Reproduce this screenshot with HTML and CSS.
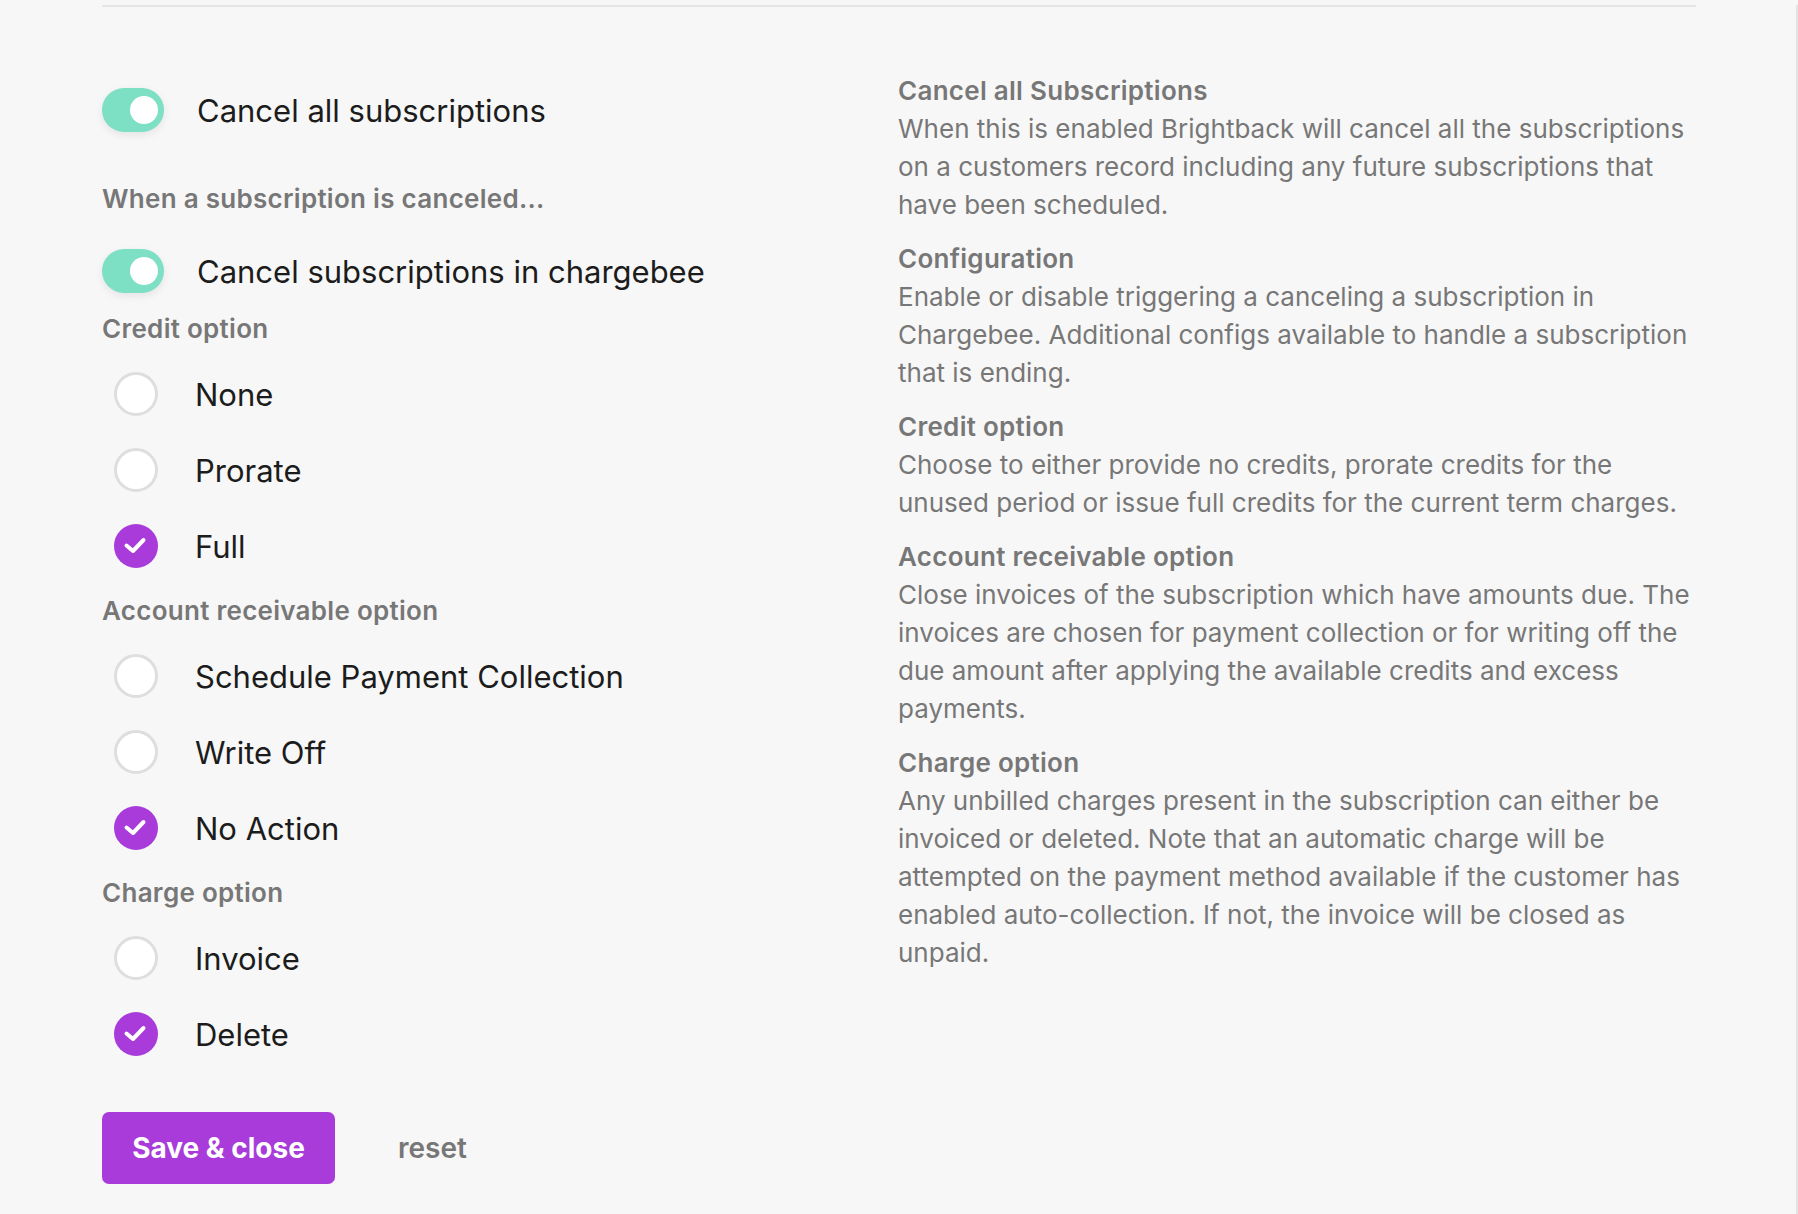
FILE: index.html
```html
<!DOCTYPE html>
<html lang="en">
<head>
<meta charset="utf-8">
<title>Cancel subscriptions settings</title>
<link rel="stylesheet" href="styles.css">
</head>
<body>
<div class="page">
  <div class="divider"></div>
  <div class="content">
    <div class="settings">
      <div class="toggle-row">
        <span class="toggle on"><span class="knob"></span></span>
        <span class="label">Cancel all subscriptions</span>
      </div>
      <div class="group-title first">When a subscription is canceled...</div>
      <div class="toggle-row second">
        <span class="toggle on"><span class="knob"></span></span>
        <span class="label">Cancel subscriptions in chargebee</span>
      </div>

      <div class="group-title credit">Credit option</div>
      <div class="radio-list">
        <div class="radio-row"><span class="radio"></span><span class="label">None</span></div>
        <div class="radio-row"><span class="radio"></span><span class="label">Prorate</span></div>
        <div class="radio-row"><span class="radio checked"><svg viewBox="0 0 44 44"><path d="M12.5 21.5 L19 27 L29.5 16"/></svg></span><span class="label">Full</span></div>
      </div>

      <div class="group-title">Account receivable option</div>
      <div class="radio-list">
        <div class="radio-row"><span class="radio"></span><span class="label">Schedule Payment Collection</span></div>
        <div class="radio-row"><span class="radio"></span><span class="label">Write Off</span></div>
        <div class="radio-row"><span class="radio checked"><svg viewBox="0 0 44 44"><path d="M12.5 21.5 L19 27 L29.5 16"/></svg></span><span class="label">No Action</span></div>
      </div>

      <div class="group-title">Charge option</div>
      <div class="radio-list">
        <div class="radio-row"><span class="radio"></span><span class="label">Invoice</span></div>
        <div class="radio-row"><span class="radio checked"><svg viewBox="0 0 44 44"><path d="M12.5 21.5 L19 27 L29.5 16"/></svg></span><span class="label">Delete</span></div>
      </div>

      <div class="actions">
        <button class="btn-primary">Save &amp; close</button>
        <button class="btn-link">reset</button>
      </div>
    </div>

    <div class="help">
      <div class="help-section">
        <div class="help-title">Cancel all Subscriptions</div>
        <p class="help-text">When this is enabled Brightback will cancel all the subscriptions on a customers record including any future subscriptions that have been scheduled.</p>
      </div>
      <div class="help-section">
        <div class="help-title">Configuration</div>
        <p class="help-text">Enable or disable triggering a canceling a subscription in Chargebee. Additional configs available to handle a subscription that is ending.</p>
      </div>
      <div class="help-section">
        <div class="help-title">Credit option</div>
        <p class="help-text">Choose to either provide no credits, prorate credits for the unused period or issue full credits for the current term charges.</p>
      </div>
      <div class="help-section">
        <div class="help-title">Account receivable option</div>
        <p class="help-text">Close invoices of the subscription which have amounts due. The invoices are chosen for payment collection or for writing off the due amount after applying the available credits and excess payments.</p>
      </div>
      <div class="help-section">
        <div class="help-title">Charge option</div>
        <p class="help-text">Any unbilled charges present in the subscription can either be invoiced or deleted. Note that an automatic charge will be attempted on the payment method available if the customer has enabled auto-collection. If not, the invoice will be closed as unpaid.</p>
      </div>
    </div>
  </div>
</div>
</body>
</html>
```

FILE: styles.css
```css
* { box-sizing: border-box; }

html, body {
  margin: 0;
  padding: 0;
  background: #f7f7f7;
}

body {
  font-family: Inter, "Noto Sans", "Liberation Sans", sans-serif;
  color: #1d1d1d;
}

.page {
  min-height: 1214px;
  padding: 0 100px 0 102px;
  border-right: 2px solid #e3e3e3;
}

.divider {
  margin-top: 5px;
  height: 2px;
  background: #e4e4e4;
}

.content {
  display: grid;
  grid-template-columns: 796px 796px;
}

/* left column */
.settings {
  padding-top: 81px;
}

.toggle-row {
  display: flex;
  align-items: center;
  gap: 33px;
  height: 44px;
}

.toggle-row.second {
  margin-top: 31px;
}

.toggle {
  position: relative;
  width: 62px;
  height: 44px;
  border-radius: 22px;
  background: #7ddfc3;
  box-shadow: 0 3px 8px rgba(0, 0, 0, 0.08);
  flex: none;
}

.knob {
  position: absolute;
  top: 8px;
  right: 6px;
  width: 28px;
  height: 28px;
  border-radius: 50%;
  background: #fff;
}

.label {
  font-size: 31px;
  line-height: 44px;
  padding-top: 2px;
  color: #1c1c1c;
}

.group-title {
  font-size: 26px;
  font-weight: 600;
  line-height: 38px;
  letter-spacing: 0.28px;
  color: #777;
}

.group-title.first {
  margin-top: 48px;
}

.group-title.credit {
  margin-top: 17px;
}

.radio-list {
  display: flex;
  flex-direction: column;
  gap: 32px;
  padding: 24px 0;
}

.radio-row {
  display: flex;
  align-items: center;
  gap: 37px;
  height: 44px;
  padding-left: 12px;
}

.radio {
  width: 44px;
  height: 44px;
  border-radius: 50%;
  background: #fff;
  border: 3px solid #dedede;
  flex: none;
  display: flex;
  align-items: center;
  justify-content: center;
}

.radio.checked {
  background: #a83bd9;
  border: none;
}

.radio svg {
  width: 44px;
  height: 44px;
}

.radio svg path {
  fill: none;
  stroke: #fff;
  stroke-width: 4;
  stroke-linecap: round;
  stroke-linejoin: round;
}

.actions {
  display: flex;
  align-items: center;
  gap: 63px;
  margin-top: 32px;
}

.btn-primary {
  width: 233px;
  height: 72px;
  border: none;
  border-radius: 7px;
  background: #a83bd9;
  color: #fff;
  font-family: inherit;
  font-size: 28px;
  font-weight: 700;
  padding: 0;
}

.btn-link {
  border: none;
  background: none;
  padding: 0;
  font-family: inherit;
  font-size: 28px;
  font-weight: 600;
  color: #777;
}

/* right column */
.help {
  padding-top: 65px;
}

.help-section {
  margin-bottom: 16px;
}

.help-title {
  font-size: 26px;
  font-weight: 600;
  line-height: 38px;
  letter-spacing: 0.28px;
  color: #777;
}

.help-text {
  margin: 0;
  font-size: 26px;
  line-height: 38px;
  color: #777;
}
```
